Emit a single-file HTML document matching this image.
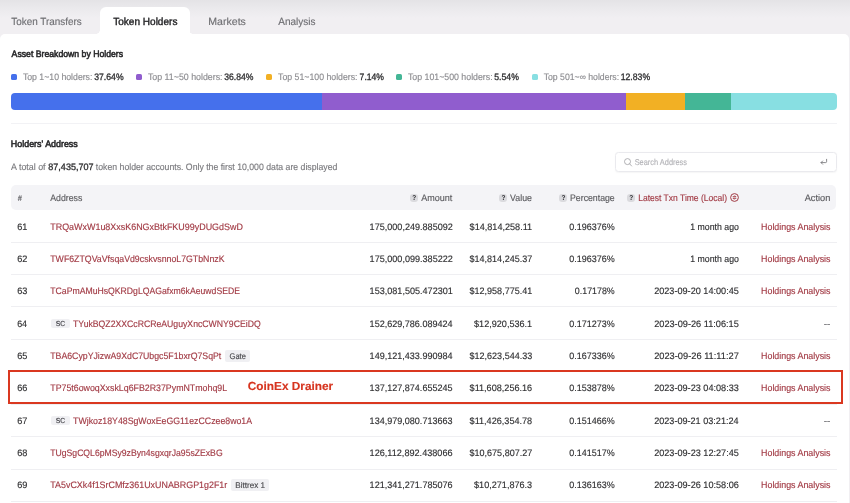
<!DOCTYPE html>
<html><head><meta charset="utf-8"><title>Token Holders</title>
<style>
*{box-sizing:border-box;margin:0;padding:0}
html,body{width:850px;height:503px;overflow:hidden}
body{background:#f1eff2;font-family:"Liberation Sans",sans-serif;color:#2e2e30;position:relative;font-size:9.4px}
.t{position:absolute;white-space:nowrap;line-height:14px;height:14px;transform-origin:0 50%;text-rendering:geometricPrecision;-webkit-text-stroke:0.15px}
.card{position:absolute;left:0;top:33.6px;width:848.5px;height:480px;background:#fff;border-radius:5px 5px 0 0}
.atab{position:absolute;left:99.6px;top:7px;width:90.2px;height:30px;background:#fff;border-radius:6px 6px 0 0}
.sq{position:absolute;width:6.2px;height:6.2px;border-radius:1.6px;top:74px}
.bar{position:absolute;left:11.2px;top:92.5px;width:825.5px;height:17.6px;border-radius:4px;overflow:hidden}
.bar i{position:absolute;top:0;height:18px}
.hr{position:absolute;height:1px;background:#efeff2;left:11.2px;width:825.4px}
.th{position:absolute;left:11.3px;top:185px;width:825px;height:25.3px;background:#f4f4f7;border-radius:5px}
.q{position:absolute;width:8px;height:8px;border-radius:3.2px;background:#dadade;top:193.6px;line-height:8.4px;font-size:6.5px;font-weight:bold;color:#2c2c30;text-align:center}
.tag{position:absolute;height:12.4px;border-radius:2px;background:#f0f0f3}
.search{position:absolute;left:614.6px;top:152.3px;width:222.2px;height:19.8px;border:1px solid #eaeaee;border-radius:3.5px;background:#fff;box-shadow:0 0.5px 1.5px rgba(0,0,0,.04)}
.hl{position:absolute;left:8.4px;top:370px;width:835px;height:33.8px;border:2px solid #da3820}
svg{position:absolute;overflow:visible}
</style></head><body>
<div style="position:absolute;left:0;top:0;width:850px;height:36px;background:linear-gradient(#e4e3e6 0px,#ebeaed 9px,#f1eff2 18px,#f1eff2 36px)"></div>
<div class="atab"></div>
<div style="position:absolute;left:97.1px;top:31.1px;width:2.5px;height:2.5px;background:radial-gradient(circle at 0 0,rgba(255,255,255,0) 2.2px,#fff 2.8px)"></div>
<div style="position:absolute;left:189.8px;top:31.1px;width:2.5px;height:2.5px;background:radial-gradient(circle at 100% 0,rgba(255,255,255,0) 2.2px,#fff 2.8px)"></div>
<div class="card"></div>
<div id="L" style="position:absolute;left:0;top:0;width:850px;height:503px;will-change:transform">
<div class="sq" style="left:11.2px;background:#4570ec"></div>
<div class="sq" style="left:135.8px;background:#905dce"></div>
<div class="sq" style="left:266px;background:#f2b024"></div>
<div class="sq" style="left:395.8px;background:#44b696"></div>
<div class="sq" style="left:531.8px;background:#88dfe2"></div>
<div class="bar"><i style="left:0.0px;width:311.0px;background:#4570ec"></i><i style="left:310.7px;width:304.2px;background:#905dce"></i><i style="left:614.6px;width:59.5px;background:#f2b024"></i><i style="left:673.8px;width:45.9px;background:#44b696"></i><i style="left:719.4px;width:106.7px;background:#88dfe2"></i></div>
<div class="hr" style="top:122.6px;background:#f2f2f5"></div>
<div class="search"></div>
<svg style="left:624px;top:158.4px" width="8" height="8.5" viewBox="0 0 8 8.5"><circle cx="3.5" cy="3.6" r="3" fill="none" stroke="#9a9a9e" stroke-width="0.75"/><path d="M5.7 5.9L7.6 8" stroke="#9a9a9e" stroke-width="0.75" stroke-linecap="round"/></svg>
<svg style="left:820.4px;top:159.4px" width="7.5" height="5.5" viewBox="0 0 7.5 5.5"><path d="M6.6 0.3V2.6Q6.6 3.6 5.6 3.6H1.2M2.6 2L1 3.6L2.6 5.2" fill="none" stroke="#6a6a6e" stroke-width="0.8" stroke-linecap="round" stroke-linejoin="round"/></svg>
<div class="th"></div>
<div class="q" style="left:410.2px">?</div>
<div class="q" style="left:499.4px">?</div>
<div class="q" style="left:559.4px">?</div>
<div class="q" style="left:627.2px">?</div>
<svg style="left:730.2px;top:193.2px" width="9" height="9" viewBox="0 0 9 9"><circle cx="4.5" cy="4.5" r="3.9" fill="none" stroke="#a23b45" stroke-width="1"/><path d="M3.1 3.7H5.9L5 2.8M5.9 5.3H3.1L4 6.2" fill="none" stroke="#a23b45" stroke-width="0.95" stroke-linecap="round" stroke-linejoin="round"/></svg>
<div class="hr" style="top:241.8px"></div>
<div class="hr" style="top:274.1px"></div>
<div class="hr" style="top:306.4px"></div>
<div class="tag" style="left:51px;top:318.6px;width:19px;height:9.6px"></div>
<div class="hr" style="top:339.1px"></div>
<div class="tag" style="left:225.3px;top:349.8px;width:25.0px"></div>
<div class="hr" style="top:371.4px"></div>
<div class="hr" style="top:403.7px"></div>
<div class="tag" style="left:51px;top:415.5px;width:19px;height:9.6px"></div>
<div class="hr" style="top:435.8px"></div>
<div class="hr" style="top:468.5px"></div>
<div class="tag" style="left:231.2px;top:479.1px;width:38.2px"></div>
<div class="hr" style="top:501.1px"></div>
<div class="t" style="left:11px;top:16px;font-size:10.4px;color:#6f6f73;transform:translateX(0.25px) scaleX(0.9530);">Token Transfers</div>
<div class="t" style="left:113px;top:16px;font-size:10.4px;color:#252527;-webkit-text-stroke:0.4px;transform:translateX(0.25px) scaleX(0.9658);">Token Holders</div>
<div class="t" style="left:208px;top:16px;font-size:10.4px;color:#6f6f73;transform:translateX(0.25px) scaleX(1.0190);">Markets</div>
<div class="t" style="left:278px;top:16px;font-size:10.4px;color:#6f6f73;transform:translateX(0.20px) scaleX(0.9649);">Analysis</div>
<div class="t" style="left:11px;top:47px;-webkit-text-stroke:0.32px;color:#28282a;-webkit-text-stroke:0.55px;transform:translateX(0.60px) scaleX(0.9263);">Asset Breakdown by Holders</div>
<div class="t" style="left:10px;top:137px;-webkit-text-stroke:0.32px;color:#28282a;-webkit-text-stroke:0.55px;transform:translateX(0.85px) scaleX(0.9479);">Holders' Address</div>
<div class="t" style="left:22px;top:70px;color:#8c8c90;transform:translateX(0.90px) scaleX(0.9292);">Top 1~10 holders:</div>
<div class="t" style="left:94px;top:70px;-webkit-text-stroke:0.32px;transform:translateX(0.25px) scaleX(0.9229);">37.64%</div>
<div class="t" style="left:147px;top:70px;color:#8c8c90;transform:translateX(0.90px) scaleX(0.9412);">Top 11~50 holders:</div>
<div class="t" style="left:224px;top:70px;-webkit-text-stroke:0.32px;transform:translateX(0.25px) scaleX(0.9182);">36.84%</div>
<div class="t" style="left:278px;top:70px;color:#8c8c90;transform:translateX(0.05px) scaleX(0.9327);">Top 51~100 holders:</div>
<div class="t" style="left:359px;top:70px;-webkit-text-stroke:0.32px;transform:translateX(0.60px) scaleX(0.9192);">7.14%</div>
<div class="t" style="left:407px;top:70px;color:#8c8c90;transform:translateX(0.90px) scaleX(0.9366);">Top 101~500 holders:</div>
<div class="t" style="left:494px;top:70px;-webkit-text-stroke:0.32px;transform:translateX(0.30px) scaleX(0.9251);">5.54%</div>
<div class="t" style="left:543px;top:70px;color:#8c8c90;transform:translateX(0.70px) scaleX(0.9253);">Top 501~∞ holders:</div>
<div class="t" style="left:620px;top:70px;-webkit-text-stroke:0.32px;transform:translateX(0.65px) scaleX(0.9261);">12.83%</div>
<div class="t" style="left:11px;top:160px;color:#7a7a7e;transform:translateX(0.10px) scaleX(0.9443);">A total of</div>
<div class="t" style="left:48px;top:160px;-webkit-text-stroke:0.32px;transform:translateX(0.30px) scaleX(0.9644);">87,435,707</div>
<div class="t" style="left:95px;top:160px;color:#7a7a7e;transform:translateX(0.85px) scaleX(0.9286);">token holder accounts. Only the first 10,000 data are displayed</div>
<div class="t" style="left:634px;top:155px;font-size:8.5px;color:#b4b4b8;transform:translateX(0.65px) scaleX(0.8731);">Search Address</div>
<div class="t" style="left:17px;top:191px;font-size:8.4px;color:#5c5c60;font-style:italic;transform:translateX(0.70px) scaleX(0.8604);">#</div>
<div class="t" style="left:50px;top:191px;color:#5c5c60;transform:translateX(0.25px) scaleX(0.9329);">Address</div>
<div class="t" style="left:421px;top:191px;color:#5c5c60;transform:translateX(0.25px) scaleX(0.9611);">Amount</div>
<div class="t" style="left:510px;top:191px;color:#5c5c60;transform:translateX(0.10px) scaleX(0.9362);">Value</div>
<div class="t" style="left:570px;top:191px;color:#5c5c60;transform:translateX(0.05px) scaleX(0.9312);">Percentage</div>
<div class="t" style="left:638px;top:191px;color:#a23b45;transform:translateX(0.20px) scaleX(0.9080);">Latest Txn Time (Local)</div>
<div class="t" style="left:804px;top:191px;color:#5c5c60;transform:translateX(0.70px) scaleX(0.9840);">Action</div>
<div class="t" style="left:17px;top:220px;transform:translateX(0.15px) scaleX(0.9772);">61</div>
<div class="t" style="left:50px;top:220px;color:#a23b45;transform:translateX(0.25px) scaleX(0.9530);">TRQaWxW1u8XxsK6NGxBtkFKU99yDUGdSwD</div>
<div class="t" style="left:369px;top:220px;transform:translateX(0.60px) scaleX(0.9672);">175,000,249.885092</div>
<div class="t" style="left:469px;top:220px;transform:translateX(0.60px) scaleX(0.9700);">$14,814,258.11</div>
<div class="t" style="left:569px;top:220px;transform:translateX(0.30px) scaleX(0.9567);">0.196376%</div>
<div class="t" style="left:690px;top:220px;transform:translateX(0.25px) scaleX(0.9325);">1 month ago</div>
<div class="t" style="left:761px;top:220px;color:#a23b45;transform:translateX(0.05px) scaleX(0.9451);">Holdings Analysis</div>
<div class="t" style="left:17px;top:252px;transform:translateX(0.15px) scaleX(0.9772);">62</div>
<div class="t" style="left:50px;top:252px;color:#a23b45;transform:translateX(0.25px) scaleX(0.9353);">TWF6ZTQVaVfsqaVd9cskvsnnoL7GTbNnzK</div>
<div class="t" style="left:369px;top:252px;transform:translateX(0.60px) scaleX(0.9672);">175,000,099.385222</div>
<div class="t" style="left:469px;top:252px;transform:translateX(0.60px) scaleX(0.9598);">$14,814,245.37</div>
<div class="t" style="left:569px;top:252px;transform:translateX(0.30px) scaleX(0.9567);">0.196376%</div>
<div class="t" style="left:690px;top:252px;transform:translateX(0.25px) scaleX(0.9325);">1 month ago</div>
<div class="t" style="left:761px;top:252px;color:#a23b45;transform:translateX(0.05px) scaleX(0.9451);">Holdings Analysis</div>
<div class="t" style="left:17px;top:284px;transform:translateX(0.15px) scaleX(0.9772);">63</div>
<div class="t" style="left:50px;top:284px;color:#a23b45;transform:translateX(0.25px) scaleX(0.9246);">TCaPmAMuHsQKRDgLQAGafxm6kAeuwdSEDE</div>
<div class="t" style="left:369px;top:284px;transform:translateX(0.60px) scaleX(0.9672);">153,081,505.472301</div>
<div class="t" style="left:469px;top:284px;transform:translateX(0.60px) scaleX(0.9598);">$12,958,775.41</div>
<div class="t" style="left:574px;top:284px;transform:translateX(0.86px) scaleX(0.9433);">0.17178%</div>
<div class="t" style="left:654px;top:284px;transform:translateX(0.15px) scaleX(0.9729);">2023-09-20 14:00:45</div>
<div class="t" style="left:761px;top:284px;color:#a23b45;transform:translateX(0.05px) scaleX(0.9451);">Holdings Analysis</div>
<div class="t" style="left:17px;top:317px;transform:translateX(0.15px) scaleX(0.9522);">64</div>
<div class="t" style="left:55px;top:317px;font-size:7.3px;color:#3c3c42;transform:translateX(0.65px) scaleX(0.9265);">SC</div>
<div class="t" style="left:73px;top:317px;color:#a23b45;transform:translateX(0.05px) scaleX(0.9257);">TYukBQZ2XXCcRCReAUguyXncCWNY9CEiDQ</div>
<div class="t" style="left:369px;top:317px;transform:translateX(0.60px) scaleX(0.9642);">152,629,786.089424</div>
<div class="t" style="left:474px;top:317px;transform:translateX(0.04px) scaleX(0.9691);">$12,920,536.1</div>
<div class="t" style="left:569px;top:317px;transform:translateX(0.30px) scaleX(0.9567);">0.171273%</div>
<div class="t" style="left:654px;top:317px;transform:translateX(0.15px) scaleX(0.9808);">2023-09-26 11:06:15</div>
<div class="t" style="left:823px;top:317px;color:#77777b;transform:translateX(0.65px) scaleX(1.0720);">--</div>
<div class="t" style="left:17px;top:349px;transform:translateX(0.15px) scaleX(0.9772);">65</div>
<div class="t" style="left:50px;top:349px;color:#a23b45;transform:translateX(0.25px) scaleX(0.9325);">TBA6CypYJizwA9XdC7Ubgc5F1bxrQ7SqPt</div>
<div class="t" style="left:229px;top:349px;font-size:8.3px;color:#4a4a4e;transform:translateX(0.50px) scaleX(0.9110);">Gate</div>
<div class="t" style="left:369px;top:349px;transform:translateX(0.60px) scaleX(0.9642);">149,121,433.990984</div>
<div class="t" style="left:469px;top:349px;transform:translateX(0.60px) scaleX(0.9598);">$12,623,544.33</div>
<div class="t" style="left:569px;top:349px;transform:translateX(0.30px) scaleX(0.9567);">0.167336%</div>
<div class="t" style="left:654px;top:349px;transform:translateX(0.15px) scaleX(0.9887);">2023-09-26 11:11:27</div>
<div class="t" style="left:761px;top:349px;color:#a23b45;transform:translateX(0.05px) scaleX(0.9451);">Holdings Analysis</div>
<div class="t" style="left:17px;top:381px;transform:translateX(0.15px) scaleX(0.9772);">66</div>
<div class="t" style="left:50px;top:381px;color:#a23b45;transform:translateX(0.25px) scaleX(0.9401);">TP75t6owoqXxskLq6FB2R37PymNTmohq9L</div>
<div class="t" style="left:369px;top:381px;transform:translateX(0.60px) scaleX(0.9642);">137,127,874.655245</div>
<div class="t" style="left:469px;top:381px;transform:translateX(0.60px) scaleX(0.9700);">$11,608,256.16</div>
<div class="t" style="left:569px;top:381px;transform:translateX(0.30px) scaleX(0.9567);">0.153878%</div>
<div class="t" style="left:654px;top:381px;transform:translateX(0.15px) scaleX(0.9729);">2023-09-23 04:08:33</div>
<div class="t" style="left:761px;top:381px;color:#a23b45;transform:translateX(0.05px) scaleX(0.9451);">Holdings Analysis</div>
<div class="t" style="left:17px;top:414px;transform:translateX(0.15px) scaleX(0.9772);">67</div>
<div class="t" style="left:55px;top:414px;font-size:7.3px;color:#3c3c42;transform:translateX(0.65px) scaleX(0.9265);">SC</div>
<div class="t" style="left:73px;top:414px;color:#a23b45;transform:translateX(0.05px) scaleX(0.9354);">TWjkoz18Y48SgWoxEeGG11ezCCzee8wo1A</div>
<div class="t" style="left:369px;top:414px;transform:translateX(0.60px) scaleX(0.9642);">134,979,080.713663</div>
<div class="t" style="left:469px;top:414px;transform:translateX(0.60px) scaleX(0.9700);">$11,426,354.78</div>
<div class="t" style="left:569px;top:414px;transform:translateX(0.30px) scaleX(0.9567);">0.151466%</div>
<div class="t" style="left:654px;top:414px;transform:translateX(0.15px) scaleX(0.9700);">2023-09-21 03:21:24</div>
<div class="t" style="left:823px;top:414px;color:#77777b;transform:translateX(0.65px) scaleX(1.0720);">--</div>
<div class="t" style="left:17px;top:446px;transform:translateX(0.15px) scaleX(0.9772);">68</div>
<div class="t" style="left:50px;top:446px;color:#a23b45;transform:translateX(0.25px) scaleX(0.9214);">TUgSgCQL6pMSy9zByn4sgxqrJa95sZExBG</div>
<div class="t" style="left:369px;top:446px;transform:translateX(0.60px) scaleX(0.9722);">126,112,892.438066</div>
<div class="t" style="left:469px;top:446px;transform:translateX(0.60px) scaleX(0.9598);">$10,675,807.27</div>
<div class="t" style="left:569px;top:446px;transform:translateX(0.30px) scaleX(0.9567);">0.141517%</div>
<div class="t" style="left:654px;top:446px;transform:translateX(0.15px) scaleX(0.9729);">2023-09-23 12:27:45</div>
<div class="t" style="left:761px;top:446px;color:#a23b45;transform:translateX(0.05px) scaleX(0.9451);">Holdings Analysis</div>
<div class="t" style="left:17px;top:478px;transform:translateX(0.15px) scaleX(0.9772);">69</div>
<div class="t" style="left:50px;top:478px;color:#a23b45;transform:translateX(0.25px) scaleX(0.9501);">TA5vCXk4f1SrCMfz361UxUNABRGP1g2F1r</div>
<div class="t" style="left:235px;top:478px;font-size:8.3px;color:#4a4a4e;transform:translateX(0.35px) scaleX(0.9758);">Bittrex 1</div>
<div class="t" style="left:369px;top:478px;transform:translateX(0.60px) scaleX(0.9642);">121,341,271.785076</div>
<div class="t" style="left:474px;top:478px;transform:translateX(0.04px) scaleX(0.9691);">$10,271,876.3</div>
<div class="t" style="left:569px;top:478px;transform:translateX(0.30px) scaleX(0.9567);">0.136163%</div>
<div class="t" style="left:654px;top:478px;transform:translateX(0.15px) scaleX(0.9729);">2023-09-26 10:58:06</div>
<div class="t" style="left:761px;top:478px;color:#a23b45;transform:translateX(0.05px) scaleX(0.9451);">Holdings Analysis</div>
<div class="t" style="left:247px;top:380px;font-size:11.7px;font-weight:bold;color:#d6341f;transform:translateX(0.85px) scaleX(1.0096);">CoinEx Drainer</div>
<div class="hl"></div>
</div></body></html>
